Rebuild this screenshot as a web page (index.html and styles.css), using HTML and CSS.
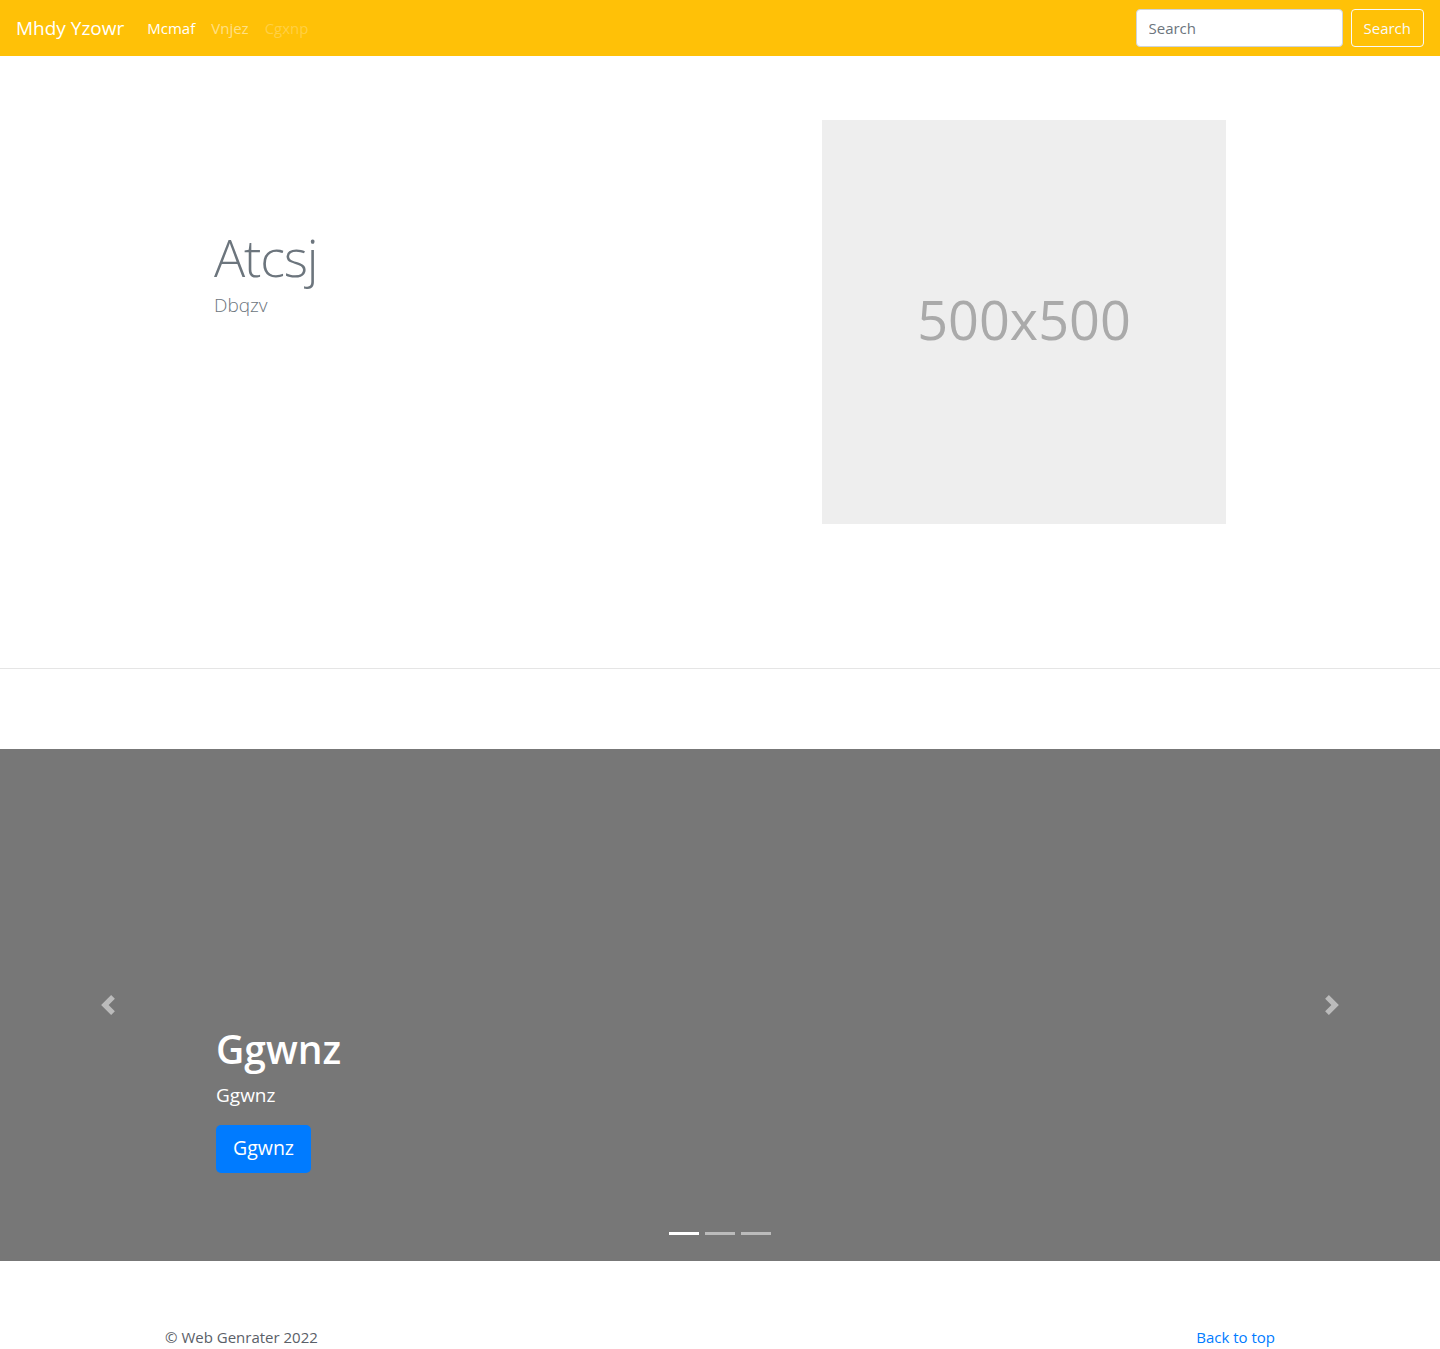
FILE: index.html
```html
<!DOCTYPE html>
<html lang="en">
<head>
<meta charset="utf-8">
<title>Mhdy Yzowr</title>
<link rel="stylesheet" href="styles.css">
</head>
<body>
<nav class="navbar">
  <a class="brand" href="#">Mhdy Yzowr</a>
  <ul class="nav">
    <li><a class="nav-link active" href="#">Mcmaf</a></li>
    <li><a class="nav-link" href="#">Vnjez</a></li>
    <li><a class="nav-link disabled" href="#">Cgxnp</a></li>
  </ul>
  <form class="search-form">
    <input class="search-input" type="text" placeholder="Search">
    <button class="btn-outline" type="button">Search</button>
  </form>
</nav>

<section class="hero">
  <div class="hero-inner">
    <div class="hero-text">
      <h1 class="display">Atcsj</h1>
      <p class="lead">Dbqzv</p>
    </div>
    <div class="placeholder">500x500</div>
  </div>
</section>

<section class="carousel">
  <a class="control control-prev" href="#">
    <svg class="control-icon" viewBox="0 0 8 8" width="20" height="20"><path fill="#fff" d="M5.25 0l-4 4 4 4 1.5-1.5L4.25 4l2.5-2.5L5.25 0z"/></svg>
  </a>
  <div class="caption">
    <h1 class="caption-title">Ggwnz</h1>
    <p class="caption-text">Ggwnz</p>
    <a class="btn-primary" href="#">Ggwnz</a>
  </div>
  <a class="control control-next" href="#">
    <svg class="control-icon" viewBox="0 0 8 8" width="20" height="20"><path fill="#fff" d="M2.75 0l-1.5 1.5L3.75 4l-2.5 2.5L2.75 8l4-4-4-4z"/></svg>
  </a>
  <ol class="indicators">
    <li class="indicator active"></li>
    <li class="indicator"></li>
    <li class="indicator"></li>
  </ol>
</section>

<footer class="footer">
  <p class="copy">© Web Genrater 2022</p>
  <a class="back-top" href="#">Back to top</a>
</footer>
</body>
</html>
```

FILE: styles.css
```css
* { box-sizing: border-box; }

html, body {
  margin: 0;
  padding: 0;
}

body {
  font-family: "Open Sans", "Noto Sans", sans-serif;
  font-size: 16px;
  line-height: 1.5;
  color: #212529;
  background: #fff;
}

a { text-decoration: none; }

.navbar {
  display: flex;
  align-items: center;
  height: 56px;
  padding: 8px 16px;
  background: #ffc107;
}

.brand {
  font-size: 19px;
  line-height: 30px;
  padding: 5px 0;
  margin-right: 15px;
  color: #fff;
}

.nav {
  display: flex;
  list-style: none;
  margin: 0;
  padding: 0;
  flex: 1;
}

.nav-link {
  display: block;
  padding: 8px;
  font-size: 15px;
  color: rgba(255,255,255,.5);
}
.nav-link.active { color: #fff; }
.nav-link.disabled { color: rgba(255,255,255,.25); }

.search-form {
  display: flex;
  align-items: center;
}

.search-input {
  width: 207px;
  height: 38px;
  margin-right: 8px;
  padding: 6px 12px;
  font-family: inherit;
  font-size: 15px;
  color: #495057;
  background: #fff;
  border: 1px solid #ced4da;
  border-radius: 4px;
}
.search-input::placeholder { color: #6c757d; }

.btn-outline {
  height: 38px;
  padding: 6px 12px;
  font-family: inherit;
  font-size: 15px;
  color: #f8f9fa;
  background: transparent;
  border: 1px solid #f8f9fa;
  border-radius: 4px;
}

.hero {
  padding: 64px 0 144px;
  border-bottom: 1px solid #e5e5e5;
}

.hero-inner {
  max-width: 1140px;
  margin: 0 auto;
  padding: 0 64px;
  display: flex;
  justify-content: space-between;
}

.hero-text {
  padding-top: 106px;
}

.display {
  margin: 0;
  font-size: 52px;
  font-weight: 300;
  line-height: 1.2;
  letter-spacing: -1.2px;
  color: #6c757d;
}

.lead {
  margin: 3px 0 0;
  font-size: 19px;
  font-weight: 300;
  color: #6c757d;
}

.placeholder {
  width: 404px;
  height: 404px;
  background: #eee;
  color: #aaa;
  font-size: 54px;
  display: flex;
  align-items: center;
  justify-content: center;
  padding-bottom: 6px;
}

.carousel {
  position: relative;
  margin-top: 80px;
  height: 512px;
  background: #777;
}

.caption {
  position: absolute;
  left: 15%;
  right: 15%;
  bottom: 68px;
  padding: 20px 0;
  color: #fff;
  z-index: 10;
}

.caption-title {
  margin: 0 0 8px;
  font-size: 39px;
  font-weight: 600;
  line-height: 1.2;
}

.caption-text {
  margin: 0 0 16px;
  font-size: 19px;
  line-height: 1.5;
}

.btn-primary {
  display: inline-block;
  height: 48px;
  padding: 8px 17px;
  font-size: 19.5px;
  line-height: 30px;
  color: #fff;
  background: #007bff;
  border-radius: 5px;
}

.control {
  position: absolute;
  top: 0;
  bottom: 0;
  width: 15%;
  display: flex;
  align-items: center;
  justify-content: center;
  opacity: .5;
}
.control-prev { left: 0; }
.control-next { right: 0; }

.control-icon { display: block; }

.indicators {
  position: absolute;
  left: 0;
  right: 0;
  bottom: 0;
  margin: 0 0 16px;
  padding: 0;
  list-style: none;
  display: flex;
  justify-content: center;
}

.indicator {
  width: 30px;
  height: 23px;
  margin: 0 3px;
  border-top: 10px solid transparent;
  border-bottom: 10px solid transparent;
  background: #fff;
  background-clip: padding-box;
  opacity: .5;
}
.indicator.active { opacity: 1; }

.footer {
  max-width: 1140px;
  margin: 64px auto 0;
  padding: 0 15px;
  display: flex;
  justify-content: space-between;
  font-size: 15px;
  line-height: 24px;
}

.copy {
  margin: 0;
  color: #5a6068;
}

.back-top {
  color: #007bff;
}
```
